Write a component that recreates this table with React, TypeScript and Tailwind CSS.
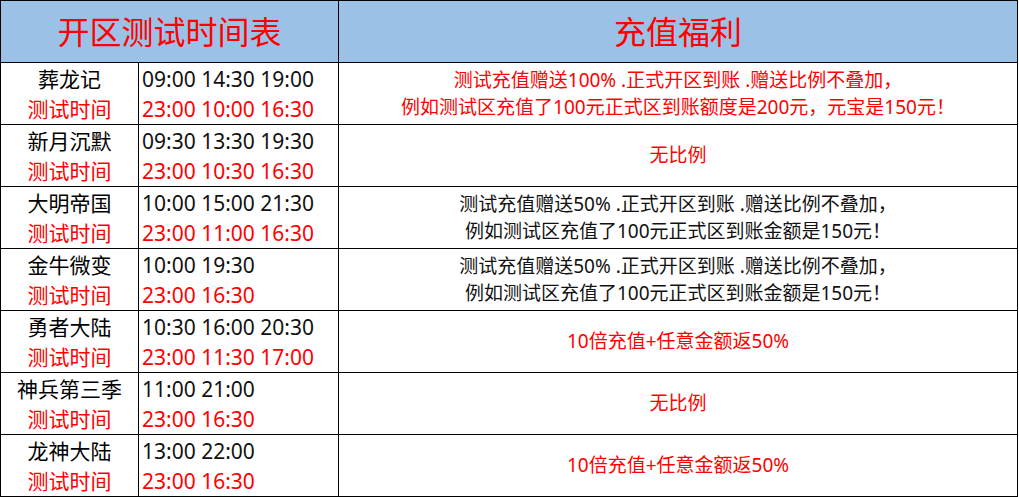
import React from "react";

type Row = {
  name: string;
  times: string;
  test: string;
  benefit: string[];
  red: boolean;
};

const rows: Row[] = [
  {
    name: "葬龙记",
    times: "09:00 14:30 19:00",
    test: "23:00 10:00 16:30",
    benefit: [
      "测试充值赠送100% .正式开区到账 .赠送比例不叠加，",
      "例如测试区充值了100元正式区到账额度是200元，元宝是150元！",
    ],
    red: true,
  },
  {
    name: "新月沉默",
    times: "09:30 13:30 19:30",
    test: "23:00 10:30 16:30",
    benefit: ["无比例"],
    red: true,
  },
  {
    name: "大明帝国",
    times: "10:00 15:00 21:30",
    test: "23:00 11:00 16:30",
    benefit: [
      "测试充值赠送50% .正式开区到账 .赠送比例不叠加，",
      "例如测试区充值了100元正式区到账金额是150元！",
    ],
    red: false,
  },
  {
    name: "金牛微变",
    times: "10:00 19:30",
    test: "23:00 16:30",
    benefit: [
      "测试充值赠送50% .正式开区到账 .赠送比例不叠加，",
      "例如测试区充值了100元正式区到账金额是150元！",
    ],
    red: false,
  },
  {
    name: "勇者大陆",
    times: "10:30 16:00 20:30",
    test: "23:00 11:30 17:00",
    benefit: ["10倍充值+任意金额返50%"],
    red: true,
  },
  {
    name: "神兵第三季",
    times: "11:00 21:00",
    test: "23:00 16:30",
    benefit: ["无比例"],
    red: true,
  },
  {
    name: "龙神大陆",
    times: "13:00 22:00",
    test: "23:00 16:30",
    benefit: ["10倍充值+任意金额返50%"],
    red: true,
  },
];

export default function App() {
  return (
    <div
      className="w-[1019px] h-[497px] bg-white"
      style={{ fontFamily: '"Noto Sans", "Noto Sans CJK SC", sans-serif' }}
    >
      <div className="w-[1018px] bg-black p-px grid grid-cols-[137px_199px_678px] grid-rows-[repeat(8,61px)] gap-px">
        <div className="col-span-2 bg-[#9BC2E6] flex items-center justify-center text-[32px] leading-none text-[#FF0000]">
          开区测试时间表
        </div>
        <div className="bg-[#9BC2E6] flex items-center justify-center text-[32px] leading-none text-[#FF0000]">
          充值福利
        </div>
        {rows.map((r) => (
          <React.Fragment key={r.name}>
            <div className="bg-white flex flex-col justify-center items-center text-[21px] leading-[30px] whitespace-nowrap">
              <span className="text-black">{r.name}</span>
              <span className="text-[#FF0000]">测试时间</span>
            </div>
            <div className="bg-white flex flex-col justify-center pl-[3px] text-[21px] leading-[30px] whitespace-nowrap">
              <span className="text-[#111]">{r.times}</span>
              <span className="text-[#FF0000]">{r.test}</span>
            </div>
            <div
              className={
                "bg-white flex flex-col justify-center items-center text-[19px] leading-[27px] whitespace-nowrap " +
                (r.red ? "text-[#FF0000]" : "text-[#111]")
              }
            >
              {r.benefit.map((b) => (
                <span key={b}>{b}</span>
              ))}
            </div>
          </React.Fragment>
        ))}
      </div>
    </div>
  );
}
